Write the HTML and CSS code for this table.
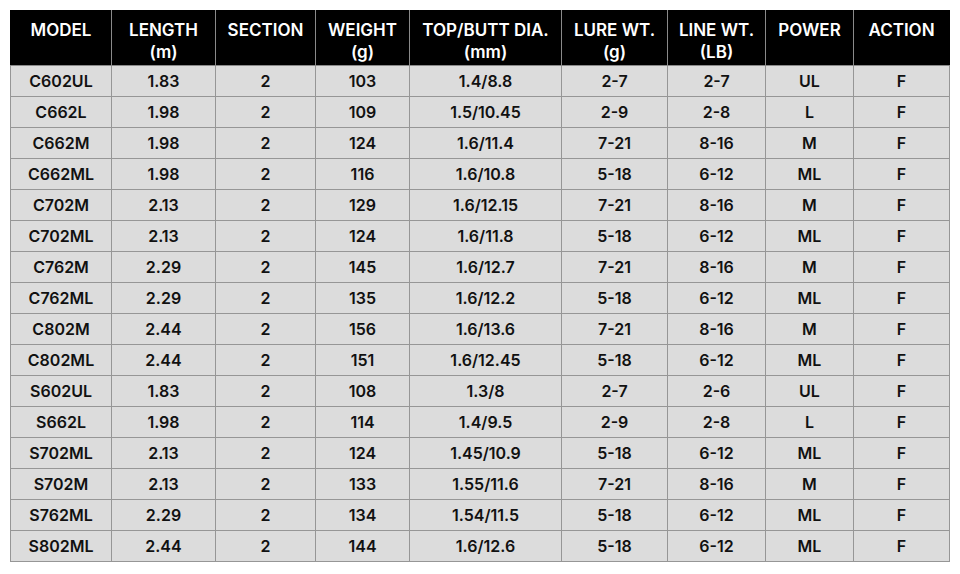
FILE: index.html
```html
<!DOCTYPE html>
<html>
<head>
<meta charset="utf-8">
<link rel="stylesheet" href="styles.css">
</head>
<body>
<table class="spec">
<colgroup>
<col class="c1"><col class="c2"><col class="c3"><col class="c4"><col class="c5"><col class="c6"><col class="c7"><col class="c8"><col class="c9">
</colgroup>
<thead>
<tr><th>MODEL</th><th>LENGTH<br>(m)</th><th>SECTION</th><th>WEIGHT<br>(g)</th><th>TOP/BUTT DIA.<br>(mm)</th><th>LURE WT.<br>(g)</th><th>LINE WT.<br>(LB)</th><th>POWER</th><th>ACTION</th></tr>
</thead>
<tbody>
<tr><td>C602UL</td><td>1.83</td><td>2</td><td>103</td><td>1.4/8.8</td><td>2-7</td><td>2-7</td><td>UL</td><td>F</td></tr>
<tr><td>C662L</td><td>1.98</td><td>2</td><td>109</td><td>1.5/10.45</td><td>2-9</td><td>2-8</td><td>L</td><td>F</td></tr>
<tr><td>C662M</td><td>1.98</td><td>2</td><td>124</td><td>1.6/11.4</td><td>7-21</td><td>8-16</td><td>M</td><td>F</td></tr>
<tr><td>C662ML</td><td>1.98</td><td>2</td><td>116</td><td>1.6/10.8</td><td>5-18</td><td>6-12</td><td>ML</td><td>F</td></tr>
<tr><td>C702M</td><td>2.13</td><td>2</td><td>129</td><td>1.6/12.15</td><td>7-21</td><td>8-16</td><td>M</td><td>F</td></tr>
<tr><td>C702ML</td><td>2.13</td><td>2</td><td>124</td><td>1.6/11.8</td><td>5-18</td><td>6-12</td><td>ML</td><td>F</td></tr>
<tr><td>C762M</td><td>2.29</td><td>2</td><td>145</td><td>1.6/12.7</td><td>7-21</td><td>8-16</td><td>M</td><td>F</td></tr>
<tr><td>C762ML</td><td>2.29</td><td>2</td><td>135</td><td>1.6/12.2</td><td>5-18</td><td>6-12</td><td>ML</td><td>F</td></tr>
<tr><td>C802M</td><td>2.44</td><td>2</td><td>156</td><td>1.6/13.6</td><td>7-21</td><td>8-16</td><td>M</td><td>F</td></tr>
<tr><td>C802ML</td><td>2.44</td><td>2</td><td>151</td><td>1.6/12.45</td><td>5-18</td><td>6-12</td><td>ML</td><td>F</td></tr>
<tr><td>S602UL</td><td>1.83</td><td>2</td><td>108</td><td>1.3/8</td><td>2-7</td><td>2-6</td><td>UL</td><td>F</td></tr>
<tr><td>S662L</td><td>1.98</td><td>2</td><td>114</td><td>1.4/9.5</td><td>2-9</td><td>2-8</td><td>L</td><td>F</td></tr>
<tr><td>S702ML</td><td>2.13</td><td>2</td><td>124</td><td>1.45/10.9</td><td>5-18</td><td>6-12</td><td>ML</td><td>F</td></tr>
<tr><td>S702M</td><td>2.13</td><td>2</td><td>133</td><td>1.55/11.6</td><td>7-21</td><td>8-16</td><td>M</td><td>F</td></tr>
<tr><td>S762ML</td><td>2.29</td><td>2</td><td>134</td><td>1.54/11.5</td><td>5-18</td><td>6-12</td><td>ML</td><td>F</td></tr>
<tr><td>S802ML</td><td>2.44</td><td>2</td><td>144</td><td>1.6/12.6</td><td>5-18</td><td>6-12</td><td>ML</td><td>F</td></tr>
</tbody>
</table>
</body>
</html>
```
FILE: styles.css
```css
html, body {
  margin: 0;
  background: #ffffff;
}
body {
  padding: 10px;
  font-family: Inter, "Liberation Sans", sans-serif;
}
.spec {
  border-collapse: collapse;
  table-layout: fixed;
  width: 939px;
  font-weight: 600;
  font-size: 16px;
  color: #111;
}
.c1 { width: 101px; }
.c2 { width: 104px; }
.c3 { width: 100px; }
.c4 { width: 94px; }
.c5 { width: 152px; }
.c6 { width: 106px; }
.c7 { width: 98px; }
.c8 { width: 88px; }
.c9 { width: 96px; }
.spec th {
  background: #000;
  color: #fff;
  font-weight: 600;
  font-size: 17px;
  line-height: 22px;
  vertical-align: top;
  padding: 8px 2px 0;
  height: 55px;
  box-sizing: border-box;
  border: 1px solid #8a8a8a;
  border-top-color: #000;
  white-space: nowrap;
}
.spec th:first-child { border-left-color: #000; }
.spec th:last-child { border-right-color: #000; }
.spec td {
  background: #dcdcdc;
  text-align: center;
  vertical-align: middle;
  height: 31px;
  box-sizing: border-box;
  padding: 0 2px;
  border: 1px solid #969696;
  line-height: 20px;
}
```
